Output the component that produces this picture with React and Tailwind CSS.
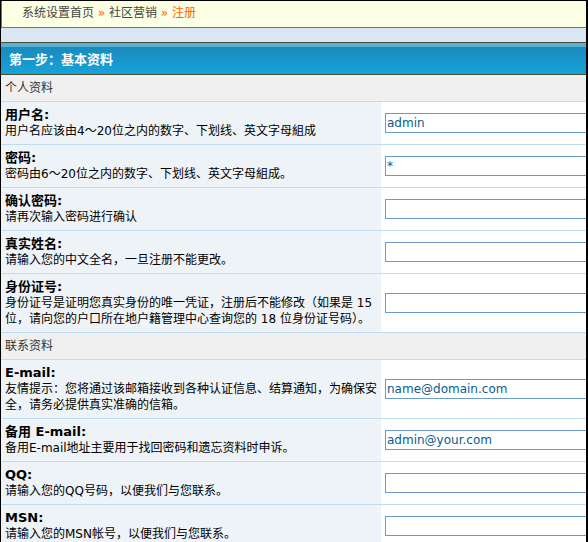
import React from "react";

const personal = [
  { title: "用户名:", desc: ["用户名应该由4～20位之内的数字、下划线、英文字母組成"], value: "admin" },
  { title: "密码:", desc: ["密码由6～20位之内的数字、下划线、英文字母組成。"], value: "*" },
  { title: "确认密码:", desc: ["请再次输入密码进行确认"], value: "" },
  { title: "真实姓名:", desc: ["请输入您的中文全名，一旦注册不能更改。"], value: "" },
  {
    title: "身份证号:",
    desc: ["身份证号是证明您真实身份的唯一凭证，注册后不能修改（如果是 15", "位，请向您的户口所在地户籍管理中心查询您的 18 位身份证号码）。"],
    value: "",
  },
];

const contact = [
  {
    title: "E-mail:",
    desc: ["友情提示：您将通过该邮箱接收到各种认证信息、结算通知，为确保安", "全，请务必提供真实准确的信箱。"],
    value: "name@domain.com",
  },
  { title: "备用 E-mail:", desc: ["备用E-mail地址主要用于找回密码和遗忘资料时申诉。"], value: "admin@your.com" },
  { title: "QQ:", desc: ["请输入您的QQ号码，以便我们与您联系。"], value: "" },
  { title: "MSN:", desc: ["请输入您的MSN帐号，以便我们与您联系。"], value: "" },
];

const Section = ({ label }) => (
  <div className="h-[27px] border-b border-[#c3ddef] bg-[#f0f0f0] pl-[4px] leading-[26px] text-[#333]">{label}</div>
);

const Row = ({ item }) => (
  <div className="grid grid-cols-[380px_1fr] border-b border-[#bfdcef]">
    <div className="bg-[#eef3f7] py-[5px] pl-[4px] leading-[16px] text-black">
      <div className="text-[13px] font-bold">{item.title}</div>
      {item.desc.map((d, i) => (
        <div key={i} className="whitespace-nowrap">{d}</div>
      ))}
    </div>
    <div className="flex items-center overflow-hidden bg-white pl-[4px]">
      <input
        readOnly
        value={item.value}
        className="h-[20px] w-[240px] shrink-0 border border-[#6b9bcd] bg-white px-[1px] text-[12px] leading-[18px] text-[#0b5c8c] outline-none"
      />
    </div>
  </div>
);

export default function App() {
  return (
    <div className="h-[542px] w-[588px] overflow-hidden border-t border-l border-r-2 border-black bg-white font-['DejaVu_Sans','Noto_Sans_CJK_SC',sans-serif] text-[12px]">
      <div className="h-[27px] border-b border-l border-[#2690b0] bg-[#fbffe4] pl-[20px] leading-[25px] text-[#444]">
        系统设置首页 <span className="text-[#ff6600]">»</span> 社区营销 <span className="text-[#ff6600]">» 注册</span>
      </div>
      <div className="h-[14px] bg-[#d9e6f4]" />
      <div className="border-y border-[#4b4b2d]">
        <div className="h-[4px] bg-[#58b0d6]" />
        <div className="h-[27px] bg-linear-to-b from-[#1a8abd] to-[#16a3d9] pl-[8px] text-[13px] font-bold leading-[26px] text-white">
          第一步：基本资料
        </div>
      </div>
      <Section label="个人资料" />
      {personal.map((it) => (
        <Row key={it.title} item={it} />
      ))}
      <Section label="联系资料" />
      {contact.map((it) => (
        <Row key={it.title} item={it} />
      ))}
    </div>
  );
}
